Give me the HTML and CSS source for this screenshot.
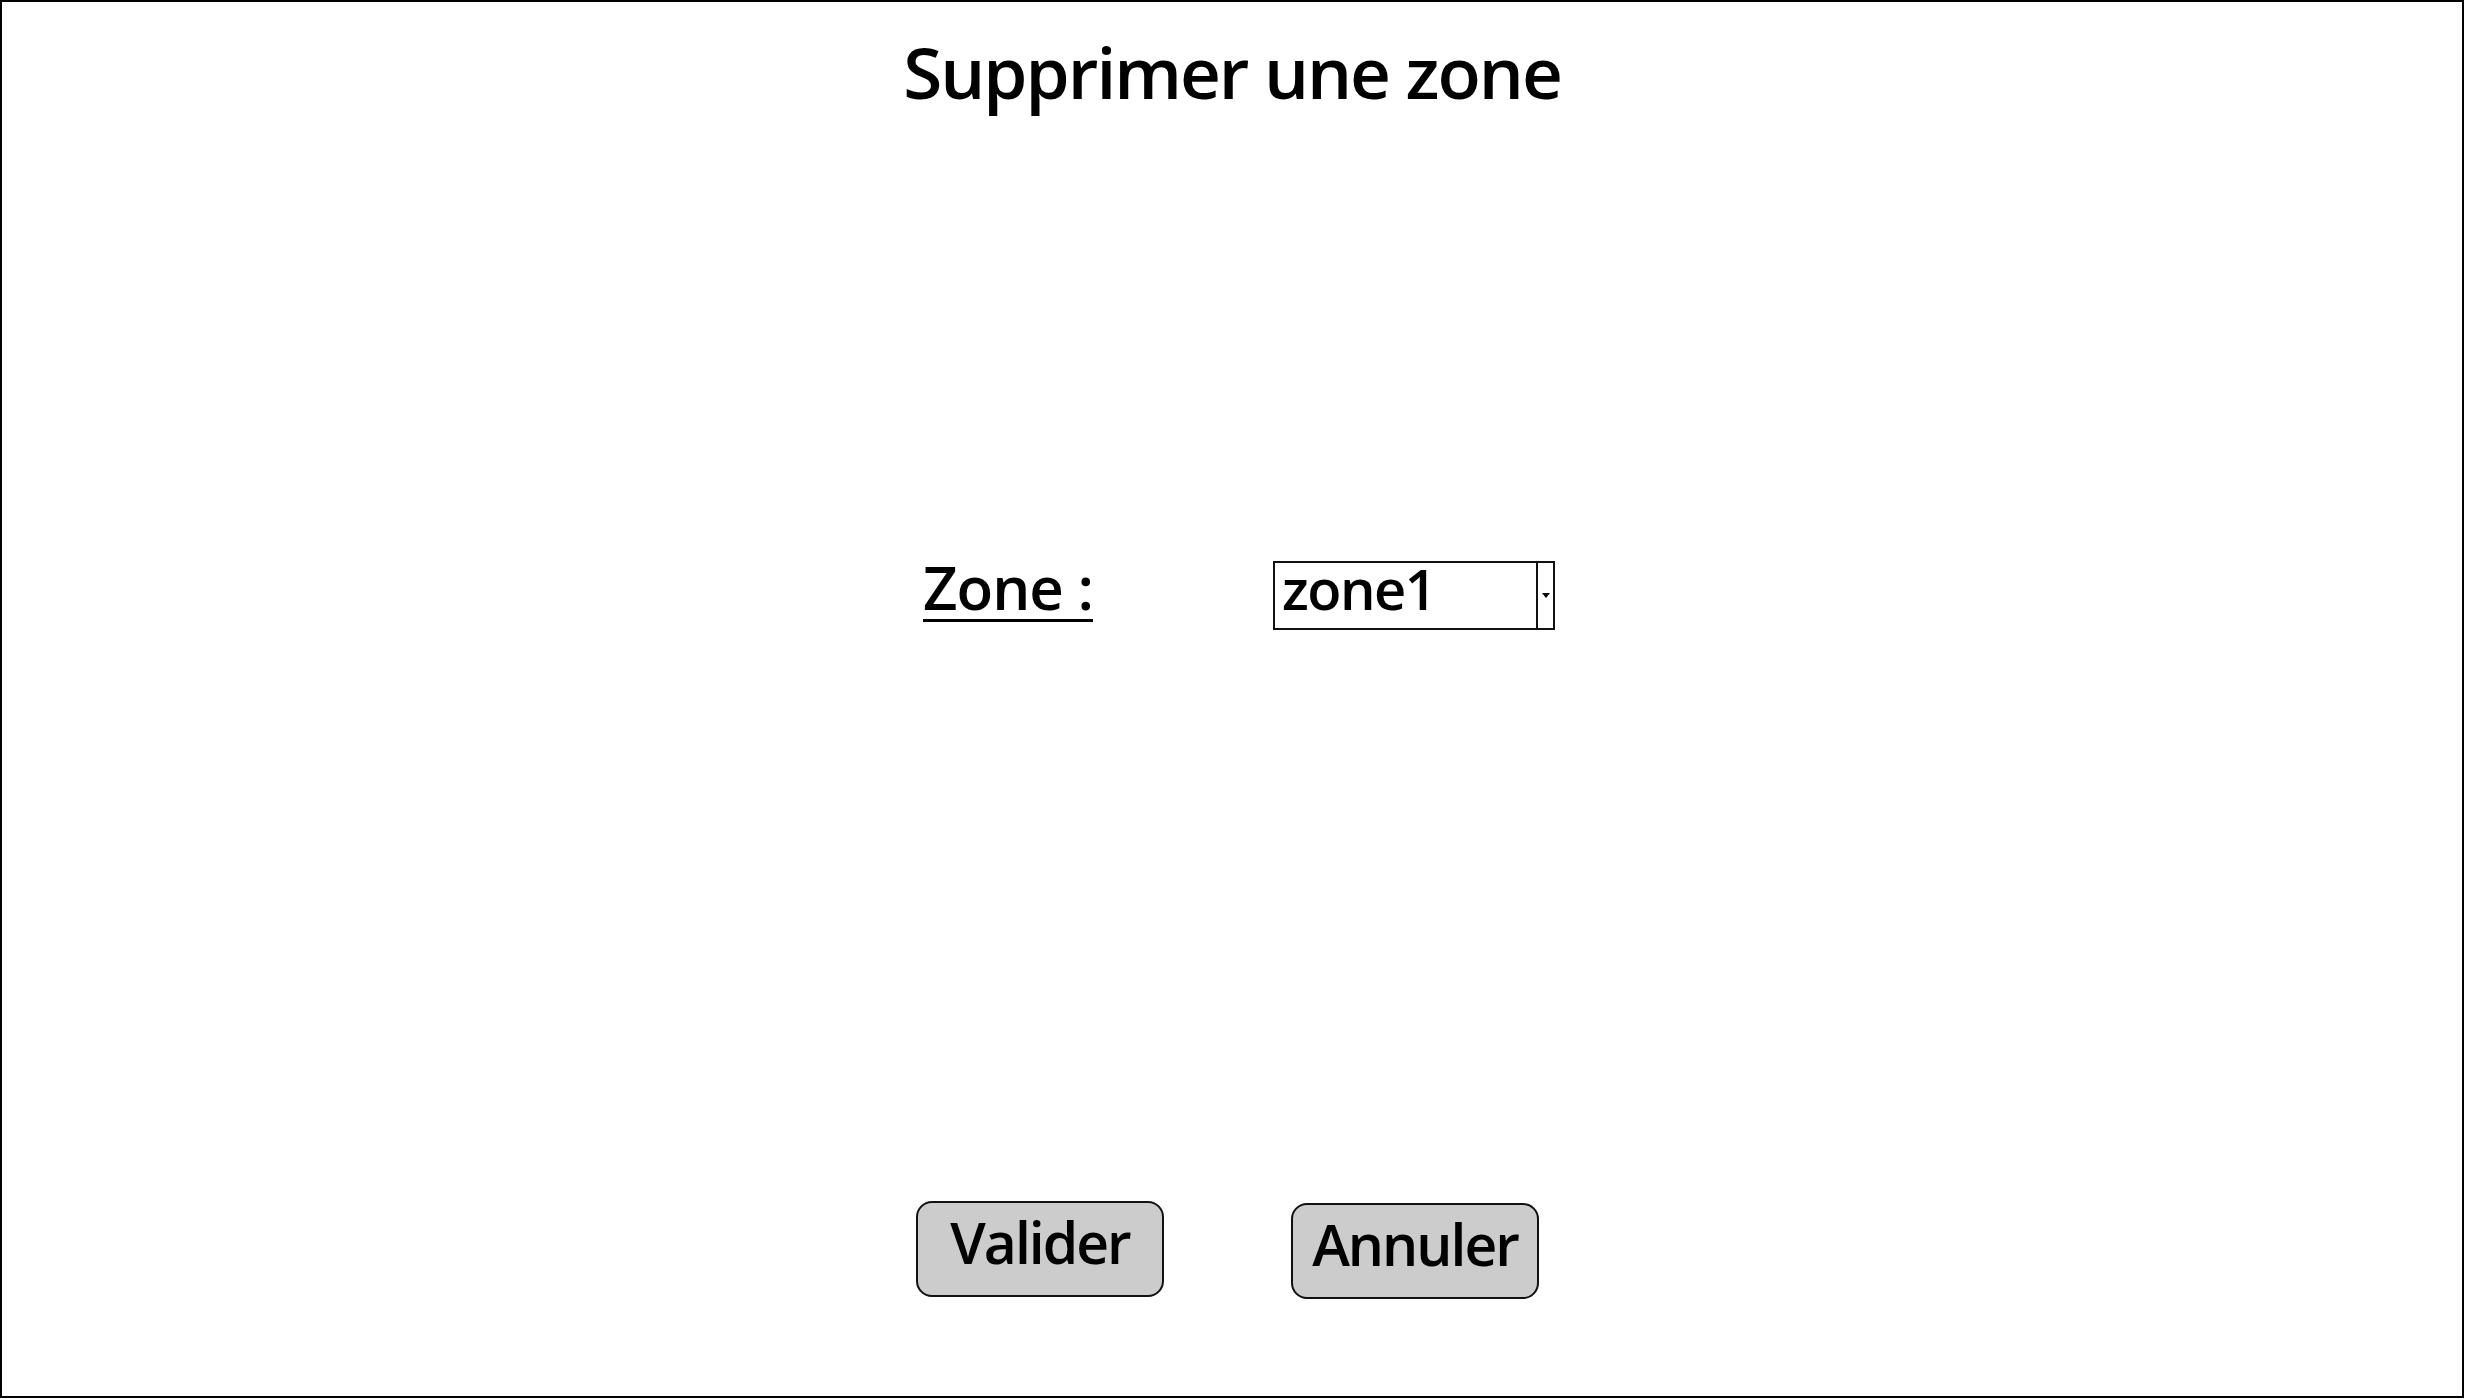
FILE: index.html
```html
<!DOCTYPE html>
<html lang="fr">
<head>
    <meta charset="UTF-8">
    <title>Supprimer une zone</title>
    <link rel="stylesheet" href="styles.css">
</head>
<body>
<div class="frame">
    <h1 class="title">Supprimer une zone</h1>
    <div class="field">
        <div class="field-label"><span class="label">Zone :</span></div>
        <div class="select">
            <span class="select-value">zone1</span>
            <span class="select-arrow"><i class="caret"></i></span>
        </div>
    </div>
    <div class="actions">
        <button class="btn" type="button">Valider</button>
        <button class="btn btn-cancel" type="button">Annuler</button>
    </div>
</div>
</body>
</html>
```

FILE: styles.css
```css
html,body{
    margin:0;
    padding:0;
    background:#fff;
}
body{
    font-family:"Open Sans","Noto Sans",sans-serif;
    font-weight:600;
    color:#000;
}
.frame{
    box-sizing:border-box;
    width:2464px;
    height:1398px;
    border:2px solid #000;
}
.title{
    margin:30px 0 0;
    font-size:71px;
    line-height:80px;
    font-weight:600;
    letter-spacing:-2px;
    text-align:center;
}
.field{
    display:flex;
    align-items:flex-start;
    margin:449px 0 0 921px;
}
.field-label{
    width:350px;
}
.label{
    display:inline-block;
    font-size:60px;
    line-height:52px;
    letter-spacing:-1px;
    padding-bottom:6px;
    border-bottom:3px solid #000;
}
.select{
    box-sizing:border-box;
    display:flex;
    width:282px;
    height:69px;
    border:2px solid #111;
}
.select-value{
    flex:1;
    padding-left:7px;
    font-size:56px;
    line-height:50px;
    letter-spacing:-1.5px;
}
.select-arrow{
    width:15px;
    border-left:2px solid #111;
    display:flex;
    align-items:center;
    justify-content:center;
}
.caret{
    width:0;
    height:0;
    border-left:4px solid transparent;
    border-right:4px solid transparent;
    border-top:5px solid #000;
}
.actions{
    display:flex;
    gap:127px;
    margin:571px 0 0 914px;
}
.btn{
    box-sizing:border-box;
    width:248px;
    height:96px;
    padding:0 0 13px;
    border:2px solid #111;
    border-radius:16px;
    background:#cccccc;
    font-family:"Open Sans","Noto Sans",sans-serif;
    font-weight:600;
    font-size:57px;
    line-height:79px;
    letter-spacing:-2px;
    color:#000;
}
.btn-cancel{
    margin-top:2px;
}
```
